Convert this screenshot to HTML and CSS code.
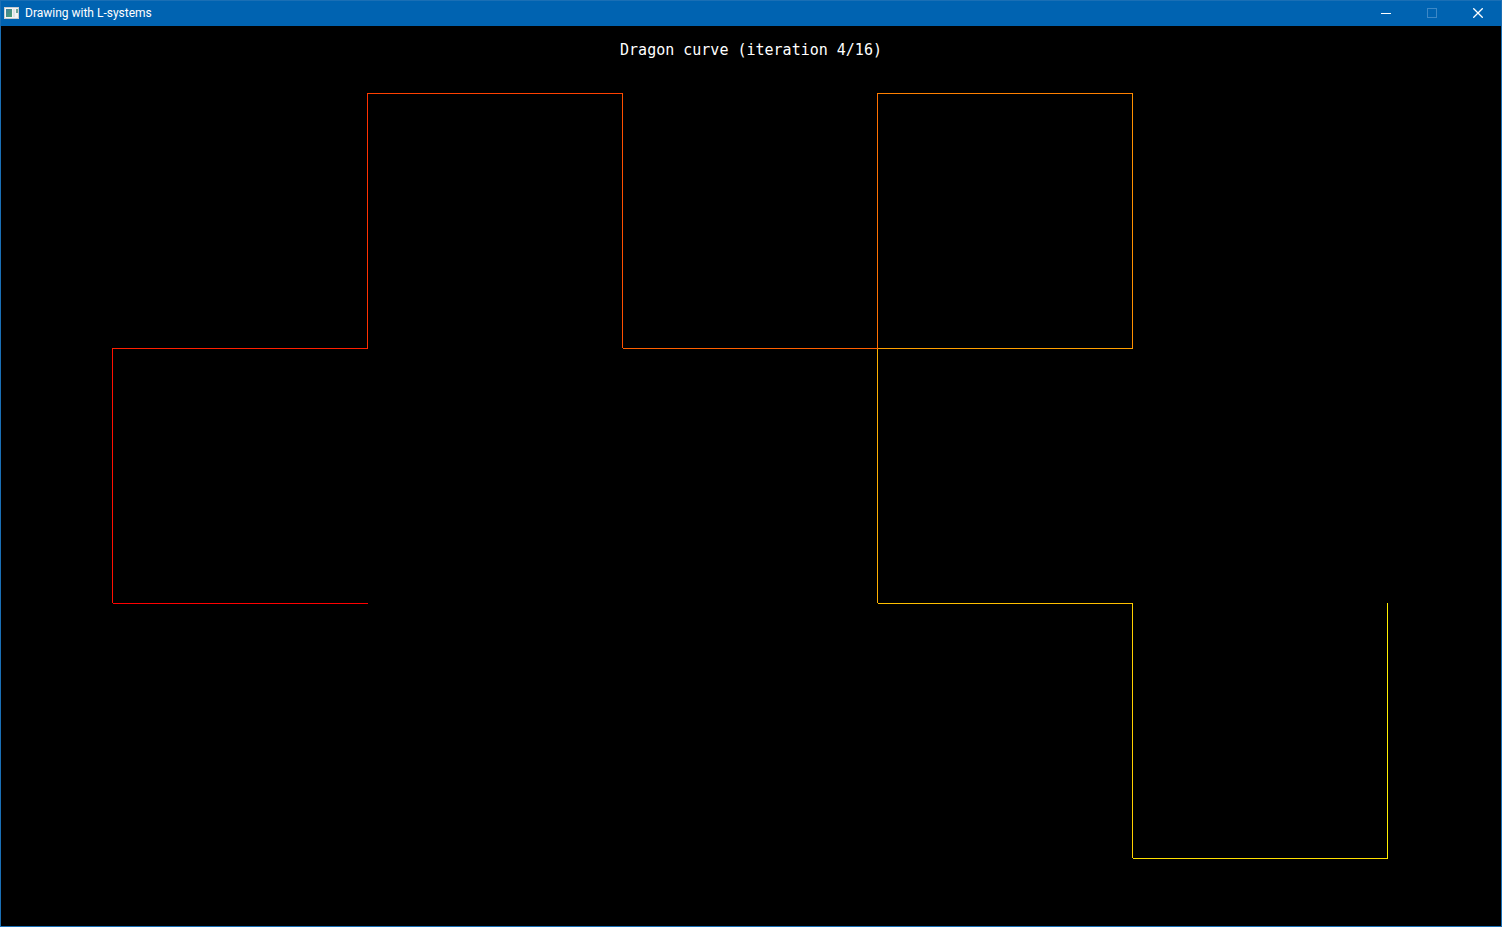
FILE: index.html
```html
<!DOCTYPE html>
<html lang="en">
<head>
<meta charset="utf-8">
<title>Drawing with L-systems</title>
<link rel="stylesheet" href="styles.css">
</head>
<body>
<div class="window">
  <header class="titlebar">
    <svg class="app-icon" viewBox="0 0 16 14" aria-hidden="true">
      <defs>
        <linearGradient id="screen" x1="0" y1="0" x2="1" y2="1">
          <stop offset="0" stop-color="#3f7f9c"/>
          <stop offset="1" stop-color="#4fa070"/>
        </linearGradient>
      </defs>
      <rect x="0" y="1" width="15" height="12" fill="#c9ccce"/>
      <rect x="1" y="2" width="13" height="10" fill="#f4f4f4"/>
      <rect x="2" y="3" width="6" height="8" fill="url(#screen)"/>
      <rect x="9" y="3" width="2" height="8" fill="#dfe3e6"/>
      <rect x="12" y="3" width="2" height="4" fill="#6fa596"/>
    </svg>
    <h1 class="title">Drawing with L-systems</h1>
    <div class="controls">
      <button class="control" type="button" aria-label="Minimize">
        <svg class="glyph" viewBox="0 0 10 10"><path d="M0 5.5H10"/></svg>
      </button>
      <button class="control" type="button" aria-label="Maximize" disabled>
        <svg class="glyph" viewBox="0 0 10 10"><path d="M.5 .5H9.5V9.5H.5Z"/></svg>
      </button>
      <button class="control" type="button" aria-label="Close">
        <svg class="glyph glyph-close" viewBox="0 0 10 10"><path d="M.3 .3L9.7 9.7M9.7 .3L.3 9.7"/></svg>
      </button>
    </div>
  </header>
  <main class="stage">
    <p class="caption">Dragon curve (iteration 4/16)</p>
    <svg class="curve" viewBox="0 0 1500 900" role="img" aria-label="Dragon curve">
      <path stroke="#ff0000" d="M367 577.5H112"/>
      <path stroke="#ff1000" d="M111.5 577V322"/>
      <path stroke="#ff2000" d="M111 322.5H367"/>
      <path stroke="#ff3000" d="M366.5 323V67"/>
      <path stroke="#ff4000" d="M366 67.5H622"/>
      <path stroke="#ff5000" d="M621.5 67V322"/>
      <path stroke="#ff6000" d="M622 322.5H877"/>
      <path stroke="#ff7000" d="M876.5 322V67"/>
      <path stroke="#ff8000" d="M876 67.5H1132"/>
      <path stroke="#ff9000" d="M1131.5 67V323"/>
      <path stroke="#ffa000" d="M1132 322.5H877"/>
      <path stroke="#ffb000" d="M876.5 323V577"/>
      <path stroke="#ffc000" d="M877 577.5H1132"/>
      <path stroke="#ffd000" d="M1131.5 577V832"/>
      <path stroke="#ffe000" d="M1132 832.5H1387"/>
      <path stroke="#fff000" d="M1386.5 833V577"/>
    </svg>
  </main>
</div>
</body>
</html>
```
FILE: styles.css
```css
* {
  box-sizing: border-box;
}

body {
  margin: 0;
  background: #000;
}

.window {
  display: flex;
  flex-direction: column;
  height: 100vh;
  border: 1px solid #1a6fb5;
  background: #000;
}

.titlebar {
  display: flex;
  flex: none;
  align-items: center;
  height: 25px;
  padding: 0 0 1px 3px;
  background: #0063b1;
  color: #fff;
}

.app-icon {
  width: 16px;
  height: 14px;
}

.title {
  flex: 1;
  margin: 0 0 0 5px;
  font: 400 12px/16px "Segoe UI", Roboto, "Noto Sans", sans-serif;
}

.controls {
  display: flex;
  align-self: stretch;
}

.control {
  display: grid;
  place-items: center;
  width: 46px;
  padding: 0;
  border: 0;
  background: transparent;
  color: #fff;
}

.control:disabled {
  color: #3d88c6;
}

.glyph {
  width: 10px;
  height: 10px;
  fill: none;
  stroke: currentColor;
  shape-rendering: crispEdges;
}

.glyph-close {
  stroke-width: 1.3;
  shape-rendering: auto;
}

.stage {
  display: grid;
  flex: 1;
  min-height: 0;
}

.caption,
.curve {
  grid-area: 1 / 1;
}

.caption {
  justify-self: center;
  margin: 14px 0 0;
  color: #fff;
  font: 15px/20px Consolas, "DejaVu Sans Mono", monospace;
}

.curve {
  width: 100%;
  height: 100%;
  min-height: 0;
  fill: none;
  stroke-width: 1;
  shape-rendering: crispEdges;
}
```
